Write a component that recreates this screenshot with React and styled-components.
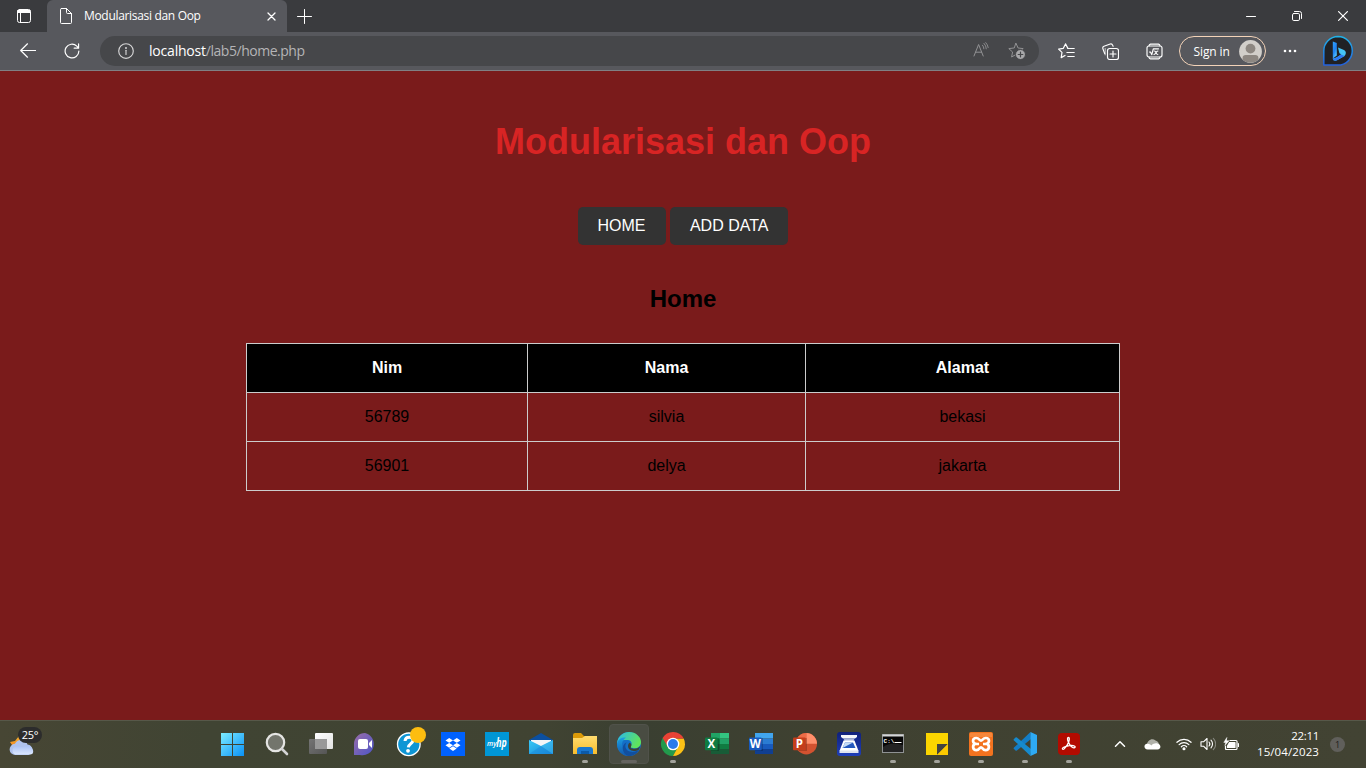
import React from 'react';
import styled, { createGlobalStyle } from 'styled-components';

const Global = createGlobalStyle`
  * { box-sizing: border-box; }
  html, body { margin: 0; padding: 0; }
  body { overflow: hidden; background: #7a1b1b; }
  svg { display: block; flex: none; }
`;

const uiFont = `"Open Sans", "Noto Sans", sans-serif`;

const Screen = styled.div`
  width: 1366px;
  height: 768px;
  display: flex;
  flex-direction: column;
  overflow: hidden;
  font-family: ${uiFont};
`;

/* ---------- browser chrome ---------- */
const TabStrip = styled.header`
  height: 32px;
  display: flex;
  align-items: center;
  background: #3a3b3e;
`;
const TabActions = styled.div`
  width: 47px;
  padding-left: 16px;
`;
const Tab = styled.div`
  width: 240px;
  height: 32px;
  padding: 0 11px 0 13px;
  display: flex;
  align-items: center;
  background: #57585d;
  border-radius: 6px 6px 0 0;
`;
const TabTitle = styled.span`
  flex: 1;
  margin-left: 12px;
  color: #fff;
  font-size: 12px;
  line-height: 16px;
  letter-spacing: -0.32px;
  white-space: nowrap;
`;
const NewTab = styled.div`
  margin-left: 10px;
  flex: 1;
`;
const WindowButtons = styled.div`
  display: flex;
`;
const WindowButton = styled.div`
  width: 46px;
  height: 32px;
  display: flex;
  align-items: center;
  justify-content: center;
`;
const Toolbar = styled.nav`
  height: 39px;
  display: flex;
  align-items: center;
  background: #57585d;
  border-bottom: 1px solid #808084;
`;
const NavButton = styled.div`
  width: 44px;
  display: flex;
  justify-content: center;
`;
const NavButtons = styled.div`
  display: flex;
  align-items: center;
  margin-left: 6px;
`;
const AddressBar = styled.div`
  width: 939px;
  height: 30px;
  margin-left: 6px;
  padding: 0 13px 0 18px;
  display: flex;
  align-items: center;
  border-radius: 15px;
  background: #46474a;
`;
const Url = styled.span`
  flex: 1;
  margin-left: 15px;
  font-size: 14px;
  line-height: 18px;
  letter-spacing: -0.48px;
  color: #b4b4b6;
`;
const UrlHost = styled.span`
  letter-spacing: -0.2px;
  color: #fff;
`;
const AddressIcons = styled.div`
  display: flex;
  gap: 19px;
`;
const ToolIcons = styled.div`
  display: flex;
  margin-left: 5.5px;
`;
const SignIn = styled.div`
  width: 87px;
  height: 30px;
  margin-left: 2.5px;
  padding: 0 3px 0 13.5px;
  display: flex;
  align-items: center;
  justify-content: space-between;
  border: 1px solid #f3d3b8;
  border-radius: 15px;
  color: #fff;
  font-size: 12px;
  letter-spacing: -0.1px;
`;
const MoreButton = styled.div`
  width: 48px;
  display: flex;
  justify-content: center;
`;
const BingButton = styled.div`
  margin-left: 8px;
`;

/* ---------- web page ---------- */
const Page = styled.main`
  flex: 1;
  padding-top: 50px;
  display: flex;
  flex-direction: column;
  align-items: center;
  background: #7a1b1b;
  font-family: "Liberation Sans", Arial, sans-serif;
  color: #000;
`;
const PageTitle = styled.h1`
  margin: 0;
  font-size: 36px;
  line-height: 41px;
  color: #d82424;
`;
const Menu = styled.div`
  display: flex;
  gap: 4.4px;
  margin-top: 45px;
`;
const MenuLink = styled.a`
  padding: 10px 20px;
  border-radius: 5px;
  background: #333;
  color: #fff;
  font-size: 16px;
  line-height: 18px;
`;
const Heading = styled.h2`
  margin: 40px 0 30px;
  font-size: 24px;
  line-height: 28px;
`;
const Table = styled.table`
  width: 874px;
  table-layout: fixed;
  border-collapse: collapse;
  font-size: 16px;
  line-height: 18px;
  text-align: center;
`;
const HeadCell = styled.th`
  width: ${(p) => p.$width}px;
  padding: 15px;
  border: 1px solid #ccc;
  background: #000;
  color: #fff;
`;
const Cell = styled.td`
  padding: 15px;
  border: 1px solid #ccc;
`;

/* ---------- taskbar ---------- */
const Taskbar = styled.footer`
  height: 48px;
  padding-bottom: 1px;
  display: flex;
  align-items: center;
  border-top: 1px solid #575849;
  background: linear-gradient(90deg, #474634 0%, #404433 15%, #404332 40%, #3a3f31 47%, #3f4131 60%, #424333 100%);
  color: #fff;
`;
const Weather = styled.div`
  position: relative;
  width: 211px;
  height: 46px;
  padding: 8px 0 0 9px;
`;
const Temperature = styled.span`
  position: absolute;
  left: 18px;
  top: 6px;
  width: 24px;
  height: 16px;
  border-radius: 8px;
  background: #2c2c2c;
  font-size: 11px;
  line-height: 16px;
  text-align: center;
  letter-spacing: -0.2px;
`;
const Apps = styled.div`
  display: flex;
`;
const AppSlot = styled.div`
  position: relative;
  width: 44px;
  height: 46px;
  display: flex;
  align-items: center;
  justify-content: center;
`;
const AppButton = styled.div`
  width: 40px;
  height: 40px;
  display: flex;
  align-items: center;
  justify-content: center;
  border-radius: 4px;
  border: 1px solid ${(p) => (p.$active ? '#50524a' : 'transparent')};
  background: ${(p) => (p.$active ? '#494c42' : 'transparent')};
`;
const Indicator = styled.span`
  position: absolute;
  left: 50%;
  bottom: 4px;
  width: ${(p) => (p.$active ? 16 : 6)}px;
  height: 3px;
  border-radius: 2px;
  transform: translateX(-50%);
  background: ${(p) => (p.$active ? '#64635f' : '#a3a39c')};
`;
const Tray = styled.div`
  flex: 1;
  padding-left: 15px;
  display: flex;
  align-items: center;
`;
const TrayIcon = styled.div`
  width: ${(p) => p.$width}px;
  display: flex;
  justify-content: center;
`;
const Clock = styled.div`
  width: 75px;
  text-align: right;
  font-size: 11.5px;
  line-height: 16px;
  white-space: nowrap;
`;
const ClockLine = styled.div`
  letter-spacing: ${(p) => p.$tracking}px;
`;
const Badge = styled.div`
  width: 15px;
  height: 15px;
  margin-left: 11px;
  border-radius: 50%;
  background: #605f5b;
  color: #1c1c1a;
  font-size: 9px;
  line-height: 15px;
  text-align: center;
`;

/* ---------- chrome icons ---------- */
const Line = ({ w = 16, h = w, color = '#fff', sw = 1, children, box }) => (
  <svg width={w} height={h} viewBox={box || `0 0 ${w} ${h}`} fill="none" stroke={color} strokeWidth={sw} strokeLinecap="round" strokeLinejoin="round">
    {children}
  </svg>
);

const TabActionsIcon = () => (
  <Line>
    <rect x="1.5" y="1.5" width="13" height="13" rx="2" />
    <path d="M2 2.5h12v2H2z" fill="#fff" />
    <path d="M4.5 5v9" />
  </Line>
);
const FileIcon = () => (
  <Line w={12} h={16}>
    <path d="M1.5.5h5l5 5v9a1 1 0 0 1-1 1h-9a1 1 0 0 1-1-1v-13a1 1 0 0 1 1-1zM6.5.5v4a1 1 0 0 0 1 1h4" />
  </Line>
);
const CloseTabIcon = () => (
  <Line w={9} sw={1.3}><path d="M1 1l7 7M8 1l-7 7" /></Line>
);
const PlusIcon = () => (
  <Line w={15}><path d="M7.5.5v14M.5 7.5h14" /></Line>
);
const BackIcon = () => (
  <Line w={16} sw={1.2}><path d="M15.5 7.5H.8M7.5.8L.7 7.500l6.800 6.700" /></Line>
);
const ReloadIcon = () => (
  <Line w={16} box="0 0 17 17" sw={1.25}>
    <path d="M15.8 8.5a7.3 7.3 0 1 1-2.2-5.2l1.9 2M15.5 1v4.500h-4.700" />
  </Line>
);
const InfoIcon = () => (
  <Line w={16} color="#d6d6d7" sw={1.15}>
    <circle cx="8" cy="8" r="7.300" />
    <path d="M8 7.300v4.200" />
    <circle cx="8" cy="4.900" r=".4" fill="#d6d6d7" />
  </Line>
);
const ReadAloudIcon = () => (
  <Line w={16} color="#929294">
    <path d="M1 14L5.600 2.500l4.600 11.500M2.700 10.200h5.900" />
    <path d="M9.500 3.200a5 5 0 0 1 1.400 3.600M11 1.400a8 8 0 0 1 2.300 5.400M12.800.6a9 9 0 0 1 2.400 5" strokeWidth=".9" />
  </Line>
);
const starPath = 'M8 .9l2.100 4.600 5.100.6-3.800 3.400 1 5L8 12l-4.400 2.500 1-5L.8 6.100l5.100-.6z';
const AddFavoriteIcon = () => (
  <Line w={18} color="#929294">
    <path d={starPath} transform="translate(0 .5)" />
    <circle cx="12.500" cy="12.500" r="5" fill="#a8a8aa" stroke="#46474a" />
    <path d="M12.500 10.200v4.600M10.200 12.500h4.600" stroke="#46474a" strokeWidth="1.200" />
  </Line>
);
const FavoritesIcon = () => (
  <Line w={17} h={16} sw={1.2}>
    <path d="M9.800 5.100L7.500.9 5.200 5.400.6 6.100l3.400 3.300-.8 5.200 3.800-2.100" />
    <path d="M9.800 5.500h6.400M8.900 9.500h7.300M9.800 13.500h6.400" />
  </Line>
);
const CollectionsIcon = () => (
  <Line w={17} sw={1.15}>
    <path d="M2.700 10.600L.9 5.700a1.900 1.900 0 0 1 1.100-2.400L8.200 1a1.900 1.900 0 0 1 2.400 1.100l.5 1.200" />
    <path d="M3.200 11.800V5.500" opacity=".6" />
    <rect x="5.500" y="5.500" width="11" height="11" rx="2.200" />
    <path d="M11 8v6M8 11h6" />
  </Line>
);
const MathIcon = () => (
  <Line w={17} sw={1.15}>
    <rect x="1" y="3" width="15" height="11" rx="2" />
    <path d="M3 2.800a2 2 0 0 1 1.500-1.700h8A2 2 0 0 1 14 2.800M3 14.200a2 2 0 0 0 1.500 1.700h8a2 2 0 0 0 1.500-1.700" />
    <path d="M3.500 9l1 .1 1.300 2.600L7.300 5.800h5.200M8.300 8c2.300 0 1.500 3.500 3.500 3.500M11.900 8C9.700 8 10 11.500 8 11.500" />
  </Line>
);
const AvatarIcon = () => (
  <svg width="23" height="23" viewBox="0 0 23 23">
    <circle cx="11.500" cy="11.500" r="11.400" fill="#d2cfca" />
    <circle cx="11.500" cy="8.600" r="4.900" fill="#8d8781" />
    <path d="M3.600 19.600v-1.800c0-1.800 1.200-2.800 3-2.800h9.800c1.800 0 3 1 3 2.800v1.800a11.400 11.400 0 0 1-15.800 0z" fill="#8d8781" />
  </svg>
);
const MoreIcon = () => (
  <svg width="14" height="4" viewBox="0 0 14 4" fill="#fff">
    <circle cx="2" cy="2" r="1.300" /><circle cx="7" cy="2" r="1.300" /><circle cx="12" cy="2" r="1.300" />
  </svg>
);
const BingIcon = () => (
  <svg width="32" height="32" viewBox="0 0 32 32">
    <defs>
      <linearGradient id="bingRing" x1="0" y1="0" x2="0" y2="1">
        <stop offset="0" stopColor="#21b2e8" /><stop offset="1" stopColor="#2461dc" />
      </linearGradient>
      <linearGradient id="bingMark" x1="0" y1="0" x2=".5" y2="1">
        <stop offset="0" stopColor="#31a5ff" /><stop offset=".6" stopColor="#2080f0" /><stop offset="1" stopColor="#52c6ff" />
      </linearGradient>
    </defs>
    <path d="M16 1.500a14.300 14.300 0 1 1 0 28.600H1.800V15.800A14.300 14.300 0 0 1 16 1.500z" fill="#202124" stroke="url(#bingRing)" strokeWidth="1.500" strokeLinejoin="round" />
    <path d="M10.800 6.500l4 1.400v12.500l-4 3.100z" fill="url(#bingMark)" />
    <path d="M16 12.400l6 2.700c3 1.600 2 5.200-.3 6.500l-6.200 3.500c-2.400 1.200-4.700.3-4.700-1.700 2.600.2 5-1.600 8.300-4.100l-1.700-1z" fill="#45c5f5" />
    <path d="M10.800 23.400c2.600.2 5-1.600 8.300-4l3.500 1.600-7.100 4.100c-2.400 1.200-4.700.3-4.700-1.700z" fill="#2c79f2" />
  </svg>
);

/* ---------- taskbar icons, 24px grid ---------- */
const Icon = ({ children }) => (
  <svg width="24" height="24" viewBox="0 0 24 24" overflow="visible">{children}</svg>
);
const Grad = ({ id, from, to, x2 = 1, y2 = 1 }) => (
  <linearGradient id={id} x1="0" y1="0" x2={x2} y2={y2}>
    <stop offset="0" stopColor={from} /><stop offset="1" stopColor={to} />
  </linearGradient>
);
const glyph = { fill: '#fff', fontWeight: 700, textAnchor: 'middle', fontFamily: uiFont };

const WeatherIcon = () => (
  <svg width="28" height="30" viewBox="0 0 28 30">
    <defs><Grad id="cloud" from="#a9c0f4" to="#dce8ff" x2={0} /><Grad id="sun" from="#f7b733" to="#ef7d1a" x2={0} /></defs>
    <path d="M1 13l5-1 4-5 4 4-2 6-7 2z" fill="url(#sun)" />
    <path d="M6.500 26a5.600 5.600 0 0 1-.6-11.200 6.800 6.800 0 0 1 12.600.7 5.400 5.400 0 0 1 1 10.500z" fill="#b0c3ee" />
    <path d="M6 25.500a4.600 4.600 0 0 1 1-8.500c4-1 5 2.500 8 .5s8-1 9 3.500-2 4.500-4.500 4.500z" fill="url(#cloud)" />
  </svg>
);
const WindowsIcon = () => (
  <Icon>
    <defs>
      <linearGradient id="win" gradientUnits="userSpaceOnUse" x1="0" y1="1" x2="23" y2="24">
        <stop offset="0" stopColor="#7cecff" /><stop offset="1" stopColor="#0a91f7" />
      </linearGradient>
    </defs>
    <path d="M0 1h11v11H0zM12 1h11v11H12zM0 13h11v11H0zM12 13h11v11H12z" fill="url(#win)" />
  </Icon>
);
const SearchIcon = () => (
  <Icon>
    <circle cx="10.500" cy="10.500" r="8.700" fill="#73756c" stroke="#e5e5e3" strokeWidth="2.200" />
    <path d="M17 17l5 5" stroke="#d4d4d5" strokeWidth="2.600" strokeLinecap="round" />
  </Icon>
);
const TaskViewIcon = () => (
  <Icon>
    <defs><Grad id="tvA" from="#fff" to="#e2e2e2" /><Grad id="tvB" from="#747474" to="#555" /></defs>
    <rect x="6" y="1" width="18" height="16" rx="1" fill="url(#tvA)" />
    <rect x="0" y="7" width="18" height="15" rx="1" fill="url(#tvB)" />
    <path d="M6 7h12v10H6z" fill="#999" />
  </Icon>
);
const ChatIcon = () => (
  <Icon>
    <defs><Grad id="chat" from="#9a6da8" to="#4c55c9" /></defs>
    <path d="M12 1a11 11 0 1 1-5 22H1V12A11 11 0 0 1 12 1z" fill="url(#chat)" />
    <rect x="5" y="7" width="10" height="10" rx="2" fill="#fff" />
    <path d="M16 11l3-3v8l-3-3z" fill="#fff" />
  </Icon>
);
const HelpIcon = () => (
  <Icon>
    <circle cx="11.800" cy="12.300" r="11.300" fill="#0e96d5" stroke="#fff" strokeWidth="1.300" />
    <path d="M8 9c.4-5.200 8.200-4.800 8-.5-.2 3-4.300 3.200-4.700 6.800" fill="none" stroke="#fff" strokeWidth="3" />
    <circle cx="11" cy="18.800" r="1.900" fill="#fff" />
    <circle cx="21" cy="3" r="8" fill="#fdbd10" />
  </Icon>
);
const DropboxIcon = () => (
  <Icon>
    <path d="M0 0h24v24H0z" fill="#0061fe" />
    <path d="M8.200 6l3.800 2.400-3.800 2.400-3.700-2.400zM15.800 6l3.700 2.400-3.700 2.400L12 8.400zM8.200 10.900l3.800 2.400-3.800 2.400-3.700-2.400zM15.800 10.900l3.700 2.400-3.700 2.400-3.800-2.400zM12 14.200l3.700 2.400L12 19l-3.700-2.400z" fill="#fff" />
  </Icon>
);
const MyHpIcon = () => (
  <Icon>
    <path d="M0 0h24v24H0z" fill="#0096d6" />
    <text x="6.800" y="14.300" fontSize="7.500" {...glyph} fontWeight="600" fontStyle="italic" textLength="9.500" lengthAdjust="spacingAndGlyphs">my</text>
    <text x="16.500" y="15.300" fontSize="12.500" {...glyph} fontStyle="italic" textLength="10.500" lengthAdjust="spacingAndGlyphs">hp</text>
  </Icon>
);
const MailIcon = () => (
  <Icon>
    <defs><Grad id="mail" from="#39c9f5" to="#1687db" /></defs>
    <path d="M0 8L12 1l12 7v14H0z" fill="#0b4f9f" />
    <path d="M2 8h20v8H2z" fill="#f4f5f7" />
    <path d="M0 8l12 6 12-6v14H0z" fill="url(#mail)" />
    <path d="M12 14L0 22h24z" fill="#1b86d8" opacity=".45" />
    <path d="M12 14l12 8V8z" fill="#55cff7" opacity=".35" />
  </Icon>
);
const FolderIcon = () => (
  <Icon>
    <defs><Grad id="folder" from="#ffdc70" to="#f8bd2c" x2={0} /></defs>
    <path d="M0 3q0-2 2-2h6l3 3h13v8H0z" fill="#dc9a08" />
    <path d="M0 6h9l3-2h12v18H0z" fill="url(#folder)" />
    <path d="M4 22v-4q0-3 3-3h10q3 0 3 3v4z" fill="#1977ce" />
    <path d="M8 19h8v3H8z" fill="#0d5aa5" />
  </Icon>
);
const EdgeIcon = () => (
  <Icon>
    <defs>
      <Grad id="edgeA" from="#2ab8eb" to="#60e35b" x2={1} y2={.4} />
      <Grad id="edgeB" from="#1b9de2" to="#1359ad" x2={0} />
    </defs>
    <circle cx="12" cy="12" r="12" fill="#1470c7" />
    <path d="M0 11C1 4 6 0 12 0c7 0 12 5 12 10 0 4-3 6.300-6.500 6.300-2.500 0-4.300-1-3.500-2.300 1.500-2.500.5-5.600-3-6C6 7.400 1 9 0 13z" fill="url(#edgeA)" />
    <path d="M0 12c.5-5 5-6.800 9-6.500-3 2-4.500 5-4 9 .5 4.500 4 8.300 8 9.400C6 24.500 0 19 0 12z" fill="url(#edgeB)" />
    <path d="M9.600 10.200C7 13.500 8.500 19 14 19.800c3 .4 6-.6 8-2.400-2 4.500-6 6.800-10.500 6.500C5 22 3.500 13 9.600 10.200z" fill="#124f9e" />
    <path d="M14 14.500c-1 1.300.7 2.300 3.500 2.300 2.600 0 4.800-1.300 5.700-2.700l-1.200 3.300c-6 3.500-11 .4-11-3.400 0-1.600.8-2.500 1.700-3.200 1.700.7 2.200 2 1.300 3.700z" fill="#3d4236" />
  </Icon>
);
const ChromeIcon = () => (
  <Icon>
    <path d="M12 12L1.600 6A12 12 0 0 0 12 24l5.200-9z" fill="#229a4c" />
    <path d="M12 6.500h10.700A12 12 0 0 1 12 24l5-9z" fill="#fbc116" />
    <path d="M1.600 6A12 12 0 0 1 22.700 6.500H12l-5 8.500z" fill="#e94235" />
    <circle cx="12" cy="12" r="6.300" fill="#fff" />
    <circle cx="12" cy="12" r="5" fill="#2b7bec" />
  </Icon>
);
const OfficeBadge = ({ color, letter }) => (
  <>
    <path d="M6 6h8v13H6z" fill="#000" opacity=".2" />
    <rect x="0" y="5.500" width="12.700" height="12.700" rx="1" fill={color} />
    <text x="6.300" y="16" fontSize="11.500" {...glyph}>{letter}</text>
  </>
);
const ExcelIcon = () => (
  <Icon>
    <path d="M6 1h9v11H6z" fill="#21a366" /><path d="M15 1h9v5.500h-9z" fill="#33c481" />
    <path d="M15 6.500h9V12h-9z" fill="#21a366" /><path d="M6 6.500h9V12H6z" fill="#107c41" />
    <path d="M6 12h9v5H6z" fill="#185c37" /><path d="M15 12h9v5h-9z" fill="#107c41" />
    <path d="M6 17h18v5H6z" fill="#185c37" />
    <OfficeBadge color="#107c41" letter="X" />
  </Icon>
);
const WordIcon = () => (
  <Icon>
    <path d="M6 1h18v5.500H6z" fill="#41a5ee" /><path d="M6 6.500h18V12H6z" fill="#2b7cd3" />
    <path d="M6 12h18v5H6z" fill="#185abd" /><path d="M6 17h18v5H6z" fill="#103f91" />
    <OfficeBadge color="#185abd" letter="W" />
  </Icon>
);
const PowerPointIcon = () => (
  <Icon>
    <circle cx="13.300" cy="11.700" r="10.700" fill="#d35230" />
    <path d="M13.300 1A10.700 10.700 0 0 1 24 11.700H13.300z" fill="#ff8f6b" />
    <path d="M13.300 1A10.700 10.700 0 0 0 2.600 11.700h10.700z" fill="#ed6c47" />
    <OfficeBadge color="#c43e1c" letter="P" />
  </Icon>
);
const ScanIcon = () => (
  <Icon>
    <defs><Grad id="scan" from="#10207a" to="#1f3fb9" x2={0} /></defs>
    <rect width="24" height="24" rx="3" fill="url(#scan)" />
    <path d="M4 3h16v2L18 6.500H6L4 5z" fill="#f4f6fb" />
    <path d="M6.500 6.500h11L16.500 9h-9z" fill="#aab5da" />
    <path d="M6.500 8.500h11L21.500 19h-19z" fill="#fff" />
    <path d="M8 10.500h8l2.500 5.500h-13z" fill="#2458bd" />
    <path d="M5.500 16L8 10.500h8z" fill="#c5dbf5" />
    <path d="M2.500 18.500h19V21h-19z" fill="#dfe4f0" />
  </Icon>
);
const TerminalIcon = () => (
  <Icon>
    <rect x="1.500" y="2.500" width="21" height="18" fill="#070707" stroke="#8f9293" />
    <path d="M1.500 2.500h21v2h-21z" fill="#d4d6d6" />
    <path d="M2 15Q10 9 22 13v7H2z" fill="#242424" />
    <text x="8" y="10.600" fontSize="6" {...glyph} fontFamily='"Liberation Mono", monospace'>C:\</text>
    <path d="M13.500 10.500h7" stroke="#fff" />
  </Icon>
);
const NotesIcon = () => (
  <Icon>
    <path d="M1 1h22v22H1z" fill="#fcd500" />
    <path d="M12 12h11L12 23z" fill="#44443f" />
    <path d="M23 12v11H12z" fill="#fcc900" />
  </Icon>
);
const XamppIcon = () => (
  <Icon>
    <rect width="24" height="24" rx="2" fill="#f3731f" />
    <path d="M1 1h22v4H1z" fill="#fa9c57" opacity=".5" />
    <path d="M7.200 6c3 0 3.200 2.600 4.800 2.600S13.800 6 16.800 6c4 0 4 4.700 1 5.800 3.200 1.500 2.600 6.400-1.200 6.400-3 0-3-2.900-4.600-2.900s-1.600 2.900-4.600 2.900c-3.800 0-4.400-4.900-1.200-6.400-3-1.100-3-5.800 1-5.800z" fill="none" stroke="#fff" strokeWidth="2.700" />
    <path d="M6.500 12H10M14 12h3.500" stroke="#fff" strokeWidth="2.700" />
  </Icon>
);
const CodeIcon = () => (
  <Icon>
    <path d="M17.500 0L1 15.600q-.8.800 0 1.500l1.500 1.300q.6.500 1.400 0L18 7z" fill="#137dc5" />
    <path d="M17.500 24L1 8.400q-.8-.8 0-1.500l1.500-1.300q.6-.5 1.400 0L18 17z" fill="#168acd" />
    <path d="M17.500 0L24 3v18l-6.500 3z" fill="#2eaaf3" />
  </Icon>
);
const AcrobatIcon = () => (
  <Icon>
    <rect x="1" y="1" width="22" height="22" rx="4" fill="#b30b00" />
    <path d="M11.500 5.500c2.200 0-.2 8.300-4.500 11.500-1.400 1-2.400-.5-.8-1.500 3.300-2 9.300-2.800 11.500-1.200 1.300 1-.5 2.100-2.500 1-3-1.600-6.400-9.800-3.700-9.800z" fill="none" stroke="#fff" strokeWidth="1.300" />
  </Icon>
);

const apps = [
  { icon: WindowsIcon }, { icon: SearchIcon }, { icon: TaskViewIcon }, { icon: ChatIcon },
  { icon: HelpIcon }, { icon: DropboxIcon }, { icon: MyHpIcon }, { icon: MailIcon },
  { icon: FolderIcon, running: true }, { icon: EdgeIcon, running: true, active: true },
  { icon: ChromeIcon, running: true }, { icon: ExcelIcon }, { icon: WordIcon },
  { icon: PowerPointIcon }, { icon: ScanIcon }, { icon: TerminalIcon, running: true },
  { icon: NotesIcon, running: true }, { icon: XamppIcon, running: true },
  { icon: CodeIcon, running: true }, { icon: AcrobatIcon, running: true },
];

/* ---------- tray icons ---------- */
const ChevronUp = () => <Line w={12} h={8} sw={1.5}><path d="M1.500 6.200L6 1.700l4.500 4.500" /></Line>;
const CloudIcon = () => (
  <svg width="17" height="12" viewBox="0 0 17 12">
    <path d="M3 7C3 2.500 8-.500 11.500 2.500 14 3 15 5 15 7z" fill="#b0b1a9" />
    <path d="M3.700 11.500C-.5 11.500-.5 6 3 5.700c2-.3 3 .6 4.500 1.500 2-1.600 4-2.400 6-1.600 4 .8 3.800 5.900 0 5.900z" fill="#fff" />
  </svg>
);
const WifiIcon = () => (
  <Line w={16} h={14} box="0 0 17 14" sw={1.3}>
    <path d="M1 5.200a10.700 10.700 0 0 1 15 0M3.300 7.600a7.400 7.400 0 0 1 10.400 0M5.700 9.900a4 4 0 0 1 5.600 0" />
    <circle cx="8.500" cy="12" r="1" fill="#fff" />
  </Line>
);
const VolumeIcon = () => (
  <Line w={16} h={14} sw={1.1}>
    <path d="M1 4.800h2.500L7 1.500v11L3.500 9.200H1z" />
    <path d="M9 5a3 3 0 0 1 0 4M11 3.200a5.500 5.500 0 0 1 0 7.600" />
    <path d="M13.300 1.300a8 8 0 0 1 0 11.400" stroke="#85867d" />
  </Line>
);
const BatteryIcon = () => (
  <Line w={16} h={14} box="0 0 16 14" sw={1.2}>
    <path d="M7 3.500h6q1 0 1 1v7q0 1-1 1H3.500q-1 0-1-1V9" />
    <path d="M6.500 5.500h5.500v5H4.500V9z" fill="#fff" />
    <path d="M15.400 6.500v3" />
    <path d="M3.700.8L.8 5.400h2L1.900 8.500 6 3.800H3.600z" fill="#fff" strokeWidth=".5" />
  </Line>
);

const rows = [
  ['56789', 'silvia', 'bekasi'],
  ['56901', 'delya', 'jakarta'],
];

export default function App() {
  return (
    <Screen>
      <Global />
      <TabStrip>
        <TabActions><TabActionsIcon /></TabActions>
        <Tab>
          <FileIcon />
          <TabTitle>Modularisasi dan Oop</TabTitle>
          <CloseTabIcon />
        </Tab>
        <NewTab><PlusIcon /></NewTab>
        <WindowButtons>
          <WindowButton><Line w={10}><path d="M.5 5.500h9" /></Line></WindowButton>
          <WindowButton>
            <Line w={10}>
              <rect x=".5" y="2.500" width="7" height="7" rx="1.300" />
              <path d="M2.500.5h5a2 2 0 0 1 2 2v5" />
            </Line>
          </WindowButton>
          <WindowButton><Line w={10} sw={1.2}><path d="M.6.6l8.800 8.800M9.400.6L.6 9.400" /></Line></WindowButton>
        </WindowButtons>
      </TabStrip>

      <Toolbar>
        <NavButtons>
          <NavButton><BackIcon /></NavButton>
          <NavButton><ReloadIcon /></NavButton>
        </NavButtons>
        <AddressBar>
          <InfoIcon />
          <Url><UrlHost>localhost</UrlHost>/lab5/home.php</Url>
          <AddressIcons><ReadAloudIcon /><AddFavoriteIcon /></AddressIcons>
        </AddressBar>
        <ToolIcons>
          <NavButton><FavoritesIcon /></NavButton>
          <NavButton><CollectionsIcon /></NavButton>
          <NavButton><MathIcon /></NavButton>
        </ToolIcons>
        <SignIn>Sign in<AvatarIcon /></SignIn>
        <MoreButton><MoreIcon /></MoreButton>
        <BingButton><BingIcon /></BingButton>
      </Toolbar>

      <Page>
        <PageTitle>Modularisasi dan Oop</PageTitle>
        <Menu>
          <MenuLink>HOME</MenuLink>
          <MenuLink>ADD DATA</MenuLink>
        </Menu>
        <Heading>Home</Heading>
        <Table>
          <thead>
            <tr>
              <HeadCell $width={281}>Nim</HeadCell>
              <HeadCell $width={278}>Nama</HeadCell>
              <HeadCell $width={314}>Alamat</HeadCell>
            </tr>
          </thead>
          <tbody>
            {rows.map((row) => (
              <tr key={row[0]}>{row.map((value) => <Cell key={value}>{value}</Cell>)}</tr>
            ))}
          </tbody>
        </Table>
      </Page>

      <Taskbar>
        <Weather>
          <WeatherIcon />
          <Temperature>25°</Temperature>
        </Weather>
        <Apps>
          {apps.map(({ icon: AppIcon, running, active }, i) => (
            <AppSlot key={i}>
              <AppButton $active={active}><AppIcon /></AppButton>
              {running && <Indicator $active={active} />}
            </AppSlot>
          ))}
        </Apps>
        <Tray>
          <TrayIcon $width={28}><ChevronUp /></TrayIcon>
          <TrayIcon $width={36}><CloudIcon /></TrayIcon>
          <TrayIcon $width={28}><WifiIcon /></TrayIcon>
          <TrayIcon $width={20}><VolumeIcon /></TrayIcon>
          <TrayIcon $width={26}><BatteryIcon /></TrayIcon>
          <Clock>
            <ClockLine $tracking={-0.3}>22:11</ClockLine>
            <ClockLine $tracking={0.1}>15/04/2023</ClockLine>
          </Clock>
          <Badge>1</Badge>
        </Tray>
      </Taskbar>
    </Screen>
  );
}
